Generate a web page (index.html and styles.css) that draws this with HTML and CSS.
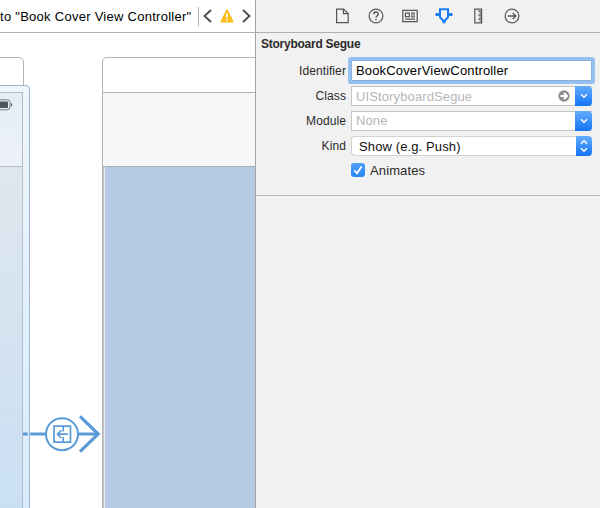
FILE: index.html
```
<!DOCTYPE html>
<html lang="en">
<head>
<meta charset="utf-8">
<title>Storyboard</title>
<link rel="stylesheet" href="styles.css">
</head>
<body>
<div class="window">
  <main class="editor">
    <header class="jumpbar">
      <span class="crumb">to "Book Cover View Controller"</span>
      <span class="divider"></span>
      <svg class="prev" width="9" height="14" viewBox="0 0 9 14"><path d="M8 1 1.5 7 8 13"/></svg>
      <svg class="warning" width="14" height="14" viewBox="0 0 14 14"><path class="tri" d="M7 1.2 12.8 12.8H1.2Z"/><path class="mark" d="M7 4.3V8.8M7 10V11.7"/></svg>
      <svg class="next" width="9" height="14" viewBox="0 0 9 14"><path d="M1 1 7.5 7 1 13"/></svg>
    </header>
    <section class="canvas">
      <div class="scene source"></div>
      <div class="selection">
        <div class="screen">
          <div class="navbar"><svg width="14" height="12" viewBox="0 0 14 12"><rect class="shell" x="-6" y=".8" width="17" height="10" rx="2.5"/><rect class="charge" x="-4" y="2.5" width="13" height="6.6" rx=".7"/><path class="tip" d="M12 3.8Q14.4 5.8 12 7.8Z"/></svg></div>
        </div>
      </div>
      <div class="scene target">
        <div class="titlebar"></div>
        <div class="navarea"></div>
        <div class="content"></div>
      </div>
      <svg class="segue" width="80" height="42" viewBox="0 0 80 42">
        <path class="line" d="M0 21H4.8M7.2 21H23M55 21H75"/>
        <path class="head" d="M57 3.3 75.2 21 57 38.7"/>
        <circle cx="39" cy="21.2" r="16"/>
        <path class="glyph" d="M31 13.2H47.5V29.2H31ZM40.2 13V18.4M40.2 24V29.4"/>
        <path class="glyph" d="M45 21.2H35M38.3 17.4 34.5 21.2 38.3 25"/>
      </svg>
    </section>
  </main>
  <aside class="inspector">
    <nav class="tabs">
      <svg viewBox="0 0 18 18"><path d="M3.6 2.1H10.6L15.2 6.5V15.7H3.6ZM10.4 2.2V6.7H15"/></svg>
      <svg viewBox="0 0 18 18"><circle cx="9" cy="9" r="6.9"/><path class="bold" d="M6.8 7.3C6.8 4.3 11.3 4.4 11.3 7 11.3 8.7 9 8.8 9 10.5M9 11.8V13.3"/></svg>
      <svg viewBox="0 0 18 18"><path d="M1.8 3.4H16.2V14.6H1.8ZM4.4 6.1H8.4V9.7H4.4ZM10 6.1H14M10 8H14M10 9.8H14M4 12.1H14"/></svg>
      <svg class="active" viewBox="0 0 18 18"><path d="M5 2.2H13V10.3L9 14.5 5 10.3Z"/><path class="arms" d="M.5 7.4H4.5M13.5 7.4H17.5M9 14V16.3"/></svg>
      <svg viewBox="0 0 18 18"><path d="M5.8 2.1H12.6V15.9H5.8ZM12.5 4.2H9.3M12.5 6.2H10.5M12.5 8.2H9.3M12.5 10.2H10.5M12.5 12.2H9.3M12.5 14H10.5"/></svg>
      <svg viewBox="0 0 18 18"><circle cx="9" cy="9" r="6.9"/><path class="bold" d="M4.8 9H12.6M9.8 6 12.8 9 9.8 12"/></svg>
    </nav>
    <section class="group">
      <h1><span>Storyboard Segue</span></h1>
      <div class="row identifier"><label>Identifier</label><div class="field focus"><span>BookCoverViewController</span></div></div>
      <div class="row class"><label>Class</label><div class="field combo"><span>UIStoryboardSegue</span><svg class="jump" width="12" height="12" viewBox="0 0 12 12"><circle cx="6" cy="6" r="5.7"/><path d="M2.5 6H8.5M6 3 9 6 6 9"/></svg><i><svg width="8" height="6" viewBox="0 0 8 6"><path d="M1 1.3 4 4.3 7 1.3"/></svg></i></div></div>
      <div class="row module"><label>Module</label><div class="field combo"><span>None</span><i><svg width="8" height="6" viewBox="0 0 8 6"><path d="M1 1.3 4 4.3 7 1.3"/></svg></i></div></div>
      <div class="row kind"><label>Kind</label><div class="field popup"><span>Show (e.g. Push)</span><i><svg width="8" height="14" viewBox="0 0 8 14"><path d="M1 4.7 4 1.7 7 4.7M1 9.3 4 12.3 7 9.3"/></svg></i></div></div>
      <div class="row check"><label></label><div class="box"><svg width="14" height="14" viewBox="0 0 14 14"><path d="M3.3 7.4 6 10.3 10.6 3.4"/></svg></div><span>Animates</span></div>
    </section>
  </aside>
</div>
</body>
</html>
```
FILE: styles.css
```
* { box-sizing: border-box; }
body { margin: 0; font-family: "Liberation Sans", Arial, sans-serif; font-size: 13px; color: #111; }
svg { display: block; fill: none; flex: none; }
.window { display: flex; width: 600px; height: 508px; overflow: hidden; }
.editor { width: 256px; flex: none; display: flex; flex-direction: column; border-right: 1px solid #a3a3a3; background: #fff; }
.jumpbar { height: 33px; flex: none; display: flex; align-items: center; border-bottom: 1px solid #b0b0b0; white-space: nowrap; }
.crumb { width: 198px; flex: none; color: #000; letter-spacing: .27px; }
.divider { width: 1px; height: 19px; background: #b5b5b5; margin-right: 4px; }
.prev, .next { stroke: #484848; stroke-width: 1.8; }
.warning { margin: 0 8px; }
.tri { fill: #fdbd19; stroke: #fdbd19; stroke-width: 1.6; stroke-linejoin: round; }
.mark { stroke: #fff; stroke-width: 1.6; }

.canvas { position: relative; flex: 1; overflow: hidden; }
.scene { position: absolute; top: 24px; height: 470px; border: 1px solid #b3b3b3; background: #fff; }
.source { left: -20px; width: 44px; border-radius: 5px; }
.selection { position: absolute; top: 52px; left: -20px; width: 50px; height: 450px; border: 1px solid #9fb4d0; border-radius: 4px; background: linear-gradient(#edf6fd, #d8ebfc); padding: 6px 6px 0 0; }
.screen { height: 100%; border: solid #b1bdca; border-width: 1px 1px 0 0; background: linear-gradient(#dfe7ee 74px, #c9dff3 420px); }
.navbar { height: 74px; border-bottom: 1px solid #b8c1cb; background: linear-gradient(#e4edf6, #edf2f7); padding: 6px 0 0 18px; }
.shell { stroke: #777f86; }
.charge, .tip { fill: #4e565e; }
.target { left: 102px; width: 180px; border-width: 1px 0 0 1px; border-radius: 5px 0 0 0; display: flex; flex-direction: column; }
.titlebar { height: 35px; border-bottom: 1px solid #b3b3b3; }
.navarea { height: 74px; background: #f7f7f7; border-bottom: 1px solid #a8abb0; }
.content { flex: 1; background: #b7cae4; border-left: 1px solid #c4c4c4; box-shadow: inset 1px 0 #e8edf3; }
.segue { position: absolute; left: 23px; top: 380px; stroke: #5a9bd9; }
.line, .head { stroke-width: 3.2; }
.segue circle { stroke-width: 2; fill: #fff; }
.glyph { stroke-width: 1.7; }

.inspector { flex: 1; background: #f1f1f1; color: #2b2b2b; }
.tabs { height: 33px; display: flex; align-items: center; gap: 16px; padding-left: 77px; border-bottom: 1px solid #b0b0b0; }
.tabs svg { width: 18px; height: 18px; stroke: #555; stroke-width: 1.2; }
.tabs .bold { stroke-width: 1.4; }
.tabs .active { stroke: #1a7df5; stroke-width: 2; }
.tabs .active .arms { stroke-width: 3; }
.group { height: 163px; border-bottom: 1px solid #b7b7b7; padding-right: 8px; }
h1 { margin: 0; height: 24px; padding: 4px 0 0 5px; font-size: 12px; line-height: 14px; letter-spacing: -.25px; }
.row { display: flex; align-items: center; height: 25px; }
.row label { width: 90px; flex: none; margin-right: 5px; text-align: right; font-size: 12px; letter-spacing: .1px; }
.field { flex: 1; height: 20px; display: flex; align-items: center; background: #fff; border: 1px solid #c6c6c6; padding-left: 4px; letter-spacing: .12px; }
.identifier { height: 27px; }
.focus { height: 21px; color: #000; border-color: #87b0dc; box-shadow: 0 0 0 3px #96c1ef; border-radius: 1px; letter-spacing: .16px; }
.combo { padding-right: 0; border-right: 0; color: #b6b6b6; }
.combo span { flex: 1; }
.jump { margin-right: 5px; }
.jump circle { fill: #8f8f8f; }
.jump path { stroke: #fff; stroke-width: 2; }
.field i { width: 17px; height: 20px; flex: none; display: flex; align-items: center; justify-content: center; background: linear-gradient(#63adfb, #1473f8); border-radius: 0 4px 4px 0; }
.field i svg { stroke: #fff; stroke-width: 1.5; }
.class, .module { height: 24.5px; }
.kind { height: 26px; }
.check { height: 22px; }
.popup { border-color: #d1d1d1; border-right: 0; border-radius: 4px; padding-left: 7px; color: #111; letter-spacing: .12px; }
.popup span { flex: 1; }
.field.popup i { width: 16px; }
.box { width: 14px; height: 14px; border-radius: 3px; background: linear-gradient(#519ef9, #2788f7); margin-right: 5px; }
.box svg { stroke: #fff; stroke-width: 1.8; }
.check span { letter-spacing: .12px; }
```
